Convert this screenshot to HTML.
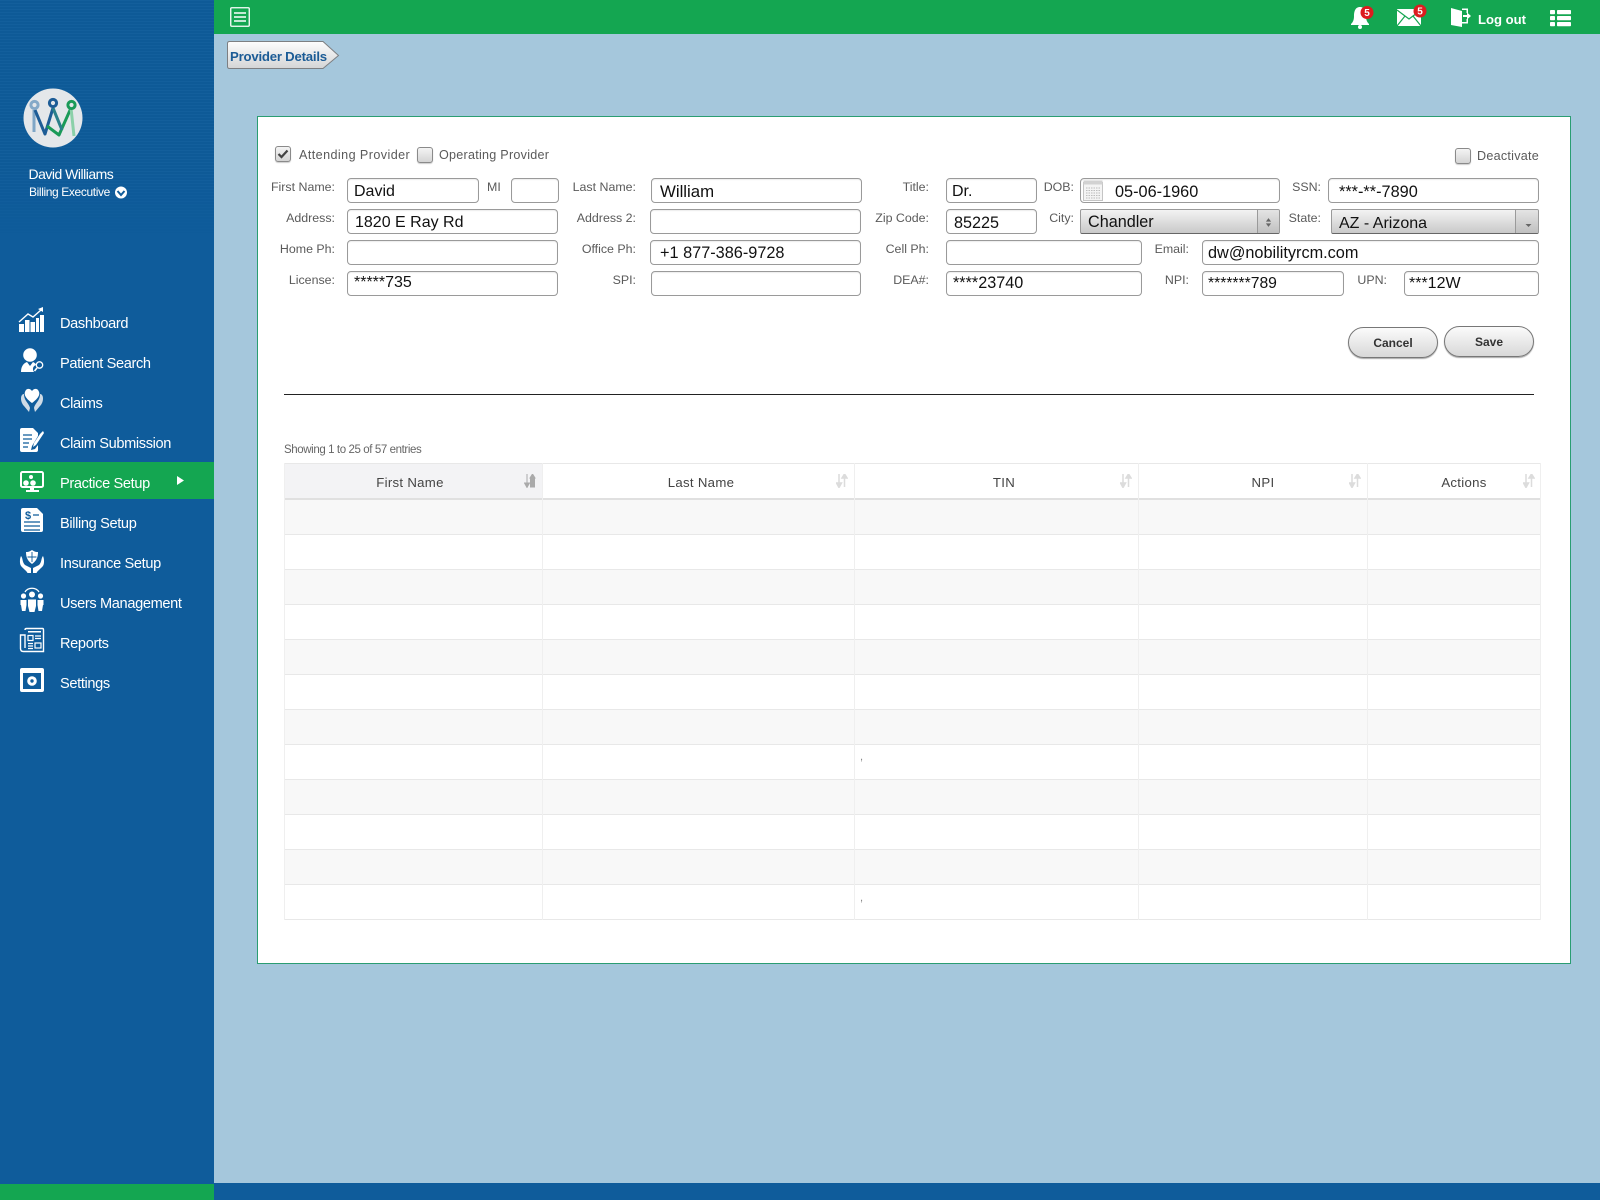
<!DOCTYPE html>
<html><head><meta charset="utf-8"><title>Provider Details</title>
<style>
html,body{margin:0;padding:0}
body{width:1600px;height:1200px;position:relative;overflow:hidden;background:#a5c7dc;font-family:"Liberation Sans",sans-serif}
.a{position:absolute}
#side{left:0;top:0;width:214px;height:1200px;background:#0f5c9b}
#stripes{left:0;top:0;width:214px;height:240px;background:repeating-linear-gradient(180deg,rgba(255,255,255,.02) 0 1px,rgba(0,0,0,.02) 1px 3px);-webkit-mask-image:linear-gradient(#000 70%,transparent);mask-image:linear-gradient(#000 70%,transparent)}
.nav{position:absolute;left:60px;color:#fff;font-size:14.6px;line-height:20px;white-space:nowrap;letter-spacing:-.36px}
#panel{left:257px;top:116px;width:1312px;height:846px;background:#fff;border:1px solid #2a9d72}
.l{position:absolute;font-size:12.4px;line-height:16px;color:#5a5a5a;white-space:nowrap}
.r{text-align:right;width:90px}
.b{position:absolute;box-sizing:border-box;background:#fff;border:1px solid #9a9a9a;border-radius:4px;box-shadow:inset 0 1px 1px rgba(0,0,0,.08)}
.t{position:absolute;font-size:16.3px;line-height:18px;color:#111;white-space:nowrap}
.c{position:absolute;box-sizing:border-box;width:16px;height:16px;border:1px solid #8a8a8a;border-radius:3px;background:linear-gradient(#f4f4f4,#d4d4d4);box-shadow:0 1px 1px rgba(0,0,0,.2)}
.s{position:absolute;box-sizing:border-box;border:1px solid #9a9a9a;border-bottom:1px solid #666;border-radius:2px;background:linear-gradient(#f3f3f3,#c9c9c9);overflow:hidden}
.p{position:absolute;box-sizing:border-box;border:1px solid #777;border-radius:16px;background:linear-gradient(#fbfbfb,#d8d8d8);box-shadow:0 1px 1px rgba(0,0,0,.35);font-size:12px;font-weight:bold;color:#333;text-align:center;line-height:30px}
.h{position:absolute;top:474px;font-size:13.2px;line-height:18px;color:#444;text-align:center;letter-spacing:.3px}
.row{position:absolute;left:284px;width:1257px;height:35px;box-sizing:border-box;border-bottom:1px solid #e8e8e8}
.v{position:absolute;top:463px;width:1px;height:457px;background:#efefef}
</style></head><body>
<div class="a" id="side"></div>
<div class="a" id="stripes"></div>
<div class="a" style="left:0;top:1184px;width:214px;height:16px;background:#14a651"></div>
<div class="a" style="left:214px;top:1183px;width:1386px;height:17px;background:#0f5c9b"></div>
<div class="a" style="left:214px;top:0;width:1386px;height:34px;background:#14a651"></div>
<div class="a" style="left:0;top:462px;width:214px;height:37px;background:#14a651"></div>

<svg class="a" style="left:0;top:0" width="214" height="720" viewBox="0 0 214 720">
 <!-- logo -->
 <circle cx="53" cy="118" r="29.5" fill="#e4e7ea"/>
 <g fill="none" stroke-width="3" stroke-linejoin="round">
  <path d="M34 110 V132" stroke="#7fa6c6"/>
  <path d="M35 110 L45 134 L53 108" stroke="#1d5c96"/>
  <path d="M47 126 L59 135 L71 108" stroke="#1a9a58"/>
  <path d="M71 108 L74 136" stroke="#8bd0a9"/>
  <path d="M53 108 L62 130" stroke="#2a7f8a"/>
  <circle cx="34.5" cy="105" r="3.6" stroke="#84a9c8"/>
  <circle cx="53" cy="103" r="3.6" stroke="#1d5c96"/>
  <circle cx="71.5" cy="105" r="3.6" stroke="#1a9a58"/>
 </g>
 <circle cx="121" cy="192.500" r="6" fill="#fff"/>
 <path d="M117.500 191 L121 195 L124.500 191" fill="none" stroke="#0f5c9b" stroke-width="2"/>
 <g fill="#fff">
  <!-- dashboard -->
  <rect x="19" y="324" width="5" height="8"/><rect x="25" y="320" width="4.500" height="12"/><rect x="30.500" y="322" width="4.500" height="10"/><rect x="36" y="318" width="3" height="14"/><rect x="40" y="315" width="4" height="17"/>
  <path d="M19 322 L28 314 L33 317 L41 310" fill="none" stroke="#fff" stroke-width="1.4"/><path d="M38 309 L43 307 L43 312z"/>
  <!-- patient -->
  <circle cx="30" cy="355" r="6.800"/><path d="M21 372 C21 366 24 363 27 362 L30 366 L33 362 C35 363 36 364 36 365 C33 366 32 369 34 372z"/>
  <circle cx="39.500" cy="365" r="3.200" fill="none" stroke="#fff" stroke-width="1.300"/><path d="M37 368 L34.500 371" stroke="#fff" stroke-width="1.600"/>
  <!-- claims -->
  <path d="M32 403 C25 398 24 394 25 392 C26 388 30 388 32 391 C34 388 38 388 39 392 C40 394 39 398 32 403z"/>
  <path d="M24 394 C20 394 20 402 24 406 L29 412 L30 408 C29 403 24 401 24 394z" fill="#cfdbe6"/>
  <path d="M40 394 C44 394 44 402 40 406 L35 412 L34 408 C35 403 40 401 40 394z" fill="#cfdbe6"/>
  <!-- claim submission -->
  <path d="M22 428 H33 L38 433 V436 L32 446 L31 450 L35 449 L38 445 V450 Q38 452 36 452 H22 Q20 452 20 450 V430 Q20 428 22 428z"/>
  <path d="M23 435 H32 M23 439 H32 M23 443 H29 M23 447 H28" stroke="#0f5c9b" stroke-width="1.300"/>
  <path d="M40 434 L43 431 L44 433 L36 445 L33 447 L34 443z"/>
  <!-- practice -->
  <rect x="21" y="472" width="22" height="15" rx="1.500" fill="none" stroke="#fff" stroke-width="2"/>
  <path d="M30 488 h4 v2 h5 v2 h-13 v-2 h4z"/>
  <circle cx="26" cy="483" r="2.800"/><circle cx="31" cy="477" r="2"/><circle cx="33" cy="483" r="2.800"/>
  <!-- billing -->
  <path d="M23 508 H37 L43 514 V530 Q43 532 41 532 H23 Q21 532 21 530 V510 Q21 508 23 508z"/>
  <path d="M24 522 H40 M24 526 H40 M24 530 H40 M33 515 H39" stroke="#0f5c9b" stroke-width="1.300"/>
  <!-- insurance -->
  <path d="M32 550 C29 552 28 552 26 552 C26 558 28 561 32 564 C36 561 38 558 38 552 C36 552 35 552 32 550z"/>
  <path d="M32 552 V562 M27.500 557 H36.500" stroke="#0f5c9b" stroke-width=".9" fill="none"/>
  <path d="M21 556 C23 558 22 562 25 565 L31 568 V573 H27.500 C26 570 22 568 20.500 565 C19.500 562 20 558 21 556z"/>
  <path d="M43 556 C41 558 42 562 39 565 L33 568 V573 H36.500 C38 570 42 568 43.500 565 C44.500 562 44 558 43 556z"/>
  <!-- users -->
  <path d="M25 592 C28 587 36 587 39 592" fill="none" stroke="#fff" stroke-width="1.300"/>
  <circle cx="23.500" cy="596" r="2.600"/><circle cx="32" cy="594.500" r="3"/><circle cx="40.500" cy="596" r="2.600"/>
  <path d="M20.500 600 H26.500 V605 L25.500 611 H22 L21 605 H20.500z"/><path d="M28 599.500 H36 V606 L34.500 612 H29.500 L28 606z"/><path d="M37.500 600 H43.500 V605 H43 L42 611 H38.500 L37.500 605z"/>
  <!-- settings -->
  <path d="M22 668 H42 Q44 668 44 670 V690 Q44 692 42 692 H22 Q20 692 20 690 V670 Q20 668 22 668z M23 673 V689 H41 V673z" fill-rule="evenodd"/>
  <circle cx="32" cy="681" r="4.800"/><circle cx="32" cy="681" r="1.700" fill="#0f5c9b"/>
 </g>
 <text x="25" y="519" font-family="Liberation Sans" font-size="11" font-weight="bold" fill="#0f5c9b">$</text>
 <!-- reports -->
 <g fill="none" stroke="#fff">
  <path d="M25 630 Q25 628.500 26.500 628.500 H42.500 Q43.500 628.500 43.500 630 V651.500 H23.500 Q20.500 651.500 20.500 648.500 V635 H25 V648" stroke-width="1.400"/>
  <rect x="28" y="631" width="13" height="1.500" fill="#fff" stroke="none"/>
  <rect x="28" y="635.500" width="5" height="5" stroke-width="1.200"/><rect x="35" y="643" width="6" height="5" stroke-width="1.200"/>
  <path d="M35 636 H41 M35 638.500 H41 M28 643.500 H33 M28 646 H33 M28 648.500 H33" stroke-width="1.200"/>
 </g>
 <path d="M177 476 L184 480.500 L177 485z" fill="#fff"/>
</svg>

<div class="a" style="left:28.500px;top:165px;font-size:14px;line-height:18px;color:#fff;white-space:nowrap;letter-spacing:-.5px">David Williams</div>
<div class="a" style="left:29px;top:184px;font-size:12px;line-height:16px;color:#fff;white-space:nowrap;letter-spacing:-.38px">Billing Executive</div>
<div class="nav" style="top:313.500px">Dashboard</div>
<div class="nav" style="top:353.500px">Patient Search</div>
<div class="nav" style="top:393.500px">Claims</div>
<div class="nav" style="top:433.500px">Claim Submission</div>
<div class="nav" style="top:473.500px">Practice Setup</div>
<div class="nav" style="top:513.500px">Billing Setup</div>
<div class="nav" style="top:553.500px">Insurance Setup</div>
<div class="nav" style="top:593.500px">Users Management</div>
<div class="nav" style="top:633.500px">Reports</div>
<div class="nav" style="top:673.500px">Settings</div>

<!-- top bar icons -->
<svg class="a" style="left:1340px;top:0" width="250" height="34" viewBox="1340 0 250 34">
 <g fill="#fff">
  <path d="M1360 7 C1365 7 1366 12 1366 16 C1366 20 1367 22 1369 24 V25 H1351 V24 C1353 22 1354 20 1354 16 C1354 12 1355 7 1360 7z"/>
  <circle cx="1360" cy="27" r="2"/>
  <path d="M1397 9 H1421 V26 H1397z"/>
  <path d="M1451 8 L1462 11 V27 L1451 25z"/>
  <path d="M1462 8.500 H1468 V13 H1466.500 V10 H1462z M1462 22 H1466.500 V19 H1468 V23.500 H1462z" />
  <path d="M1463 15 H1467 V12.500 L1471 16 L1467 19.500 V17 H1463z"/>
  <rect x="1550" y="10" width="5" height="4.200" rx=".8"/><rect x="1557" y="10" width="14" height="4.200" rx=".8"/>
  <rect x="1550" y="16" width="5" height="4.200" rx=".8"/><rect x="1557" y="16" width="14" height="4.200" rx=".8"/>
  <rect x="1550" y="22" width="5" height="4.200" rx=".8"/><rect x="1557" y="22" width="14" height="4.200" rx=".8"/>
 </g>
 <path d="M1397 10 L1409 19 L1421 10 M1397 26 L1405 16 M1421 26 L1413 16" fill="none" stroke="#14a651" stroke-width="1.200"/>
 <circle cx="1367" cy="12.500" r="6.500" fill="#dc1c1f"/><circle cx="1420" cy="11" r="6.500" fill="#dc1c1f"/>
 <text x="1367" y="16" font-family="Liberation Sans" font-size="10" font-weight="bold" fill="#fff" text-anchor="middle">5</text>
 <text x="1420" y="14.500" font-family="Liberation Sans" font-size="10" font-weight="bold" fill="#fff" text-anchor="middle">5</text>
</svg>
<div class="a" style="left:1478px;top:11px;font-size:13.100px;line-height:17px;font-weight:bold;color:#fff;white-space:nowrap">Log out</div>
<svg class="a" style="left:230px;top:7px" width="20" height="20" viewBox="0 0 20 20">
 <rect x=".75" y=".75" width="18.500" height="18.500" rx="1" fill="none" stroke="#fff" stroke-width="1.300"/>
 <path d="M4 6 H16 M4 10 H16 M4 14 H16" stroke="#fff" stroke-width="1.500"/>
</svg>

<!-- breadcrumb -->
<svg class="a" style="left:226px;top:40px" width="116" height="31" viewBox="0 0 116 31">
 <defs><linearGradient id="g" x1="0" y1="0" x2="0" y2="1"><stop offset="0" stop-color="#fdfdfd"/><stop offset="1" stop-color="#d4d5d6"/></linearGradient></defs>
 <path d="M3.500 1.500 H97 L112.500 15.500 L97 28.500 H3.500 Q1.500 28.500 1.500 26.500 V3.500 Q1.500 1.500 3.500 1.500z" fill="url(#g)" stroke="#7d7f82"/>
</svg>
<div class="a" style="left:230px;top:48px;font-size:13.200px;line-height:17px;font-weight:bold;color:#1c5c96;white-space:nowrap;letter-spacing:-.22px">Provider Details</div>

<!-- panel -->
<div class="a" id="panel"></div>

<div class="c" style="left:275px;top:146px"></div>
<svg class="a" style="left:277px;top:149px" width="12" height="10" viewBox="0 0 12 10"><path d="M1.500 5 L4.500 8 L10.500 1.500" fill="none" stroke="#444" stroke-width="2.200"/></svg>
<div class="l" style="left:299px;top:147px;letter-spacing:.42px;font-size:12.6px">Attending Provider</div>
<div class="c" style="left:417px;top:147px"></div>
<div class="l" style="left:439px;top:147px;letter-spacing:.25px;font-size:12.6px">Operating Provider</div>
<div class="c" style="left:1455px;top:148px"></div>
<div class="l" style="left:1477px;top:147.500px;letter-spacing:.25px;font-size:12.6px">Deactivate</div>

<!-- labels -->
<div class="l r" style="left:245px;top:179px">First Name:</div>
<div class="l" style="left:487px;top:179px">MI</div>
<div class="l r" style="left:546px;top:179px">Last Name:</div>
<div class="l r" style="left:839px;top:179px">Title:</div>
<div class="l r" style="left:984px;top:179px">DOB:</div>
<div class="l r" style="left:1231px;top:179px">SSN:</div>
<div class="l r" style="left:245px;top:210px">Address:</div>
<div class="l r" style="left:546px;top:210px">Address 2:</div>
<div class="l r" style="left:839px;top:210px">Zip Code:</div>
<div class="l r" style="left:984px;top:210px">City:</div>
<div class="l r" style="left:1231px;top:210px">State:</div>
<div class="l r" style="left:245px;top:241px">Home Ph:</div>
<div class="l r" style="left:546px;top:241px">Office Ph:</div>
<div class="l r" style="left:839px;top:241px">Cell Ph:</div>
<div class="l r" style="left:1099px;top:241px">Email:</div>
<div class="l r" style="left:245px;top:272px">License:</div>
<div class="l r" style="left:546px;top:272px">SPI:</div>
<div class="l r" style="left:839px;top:272px">DEA#:</div>
<div class="l r" style="left:1099px;top:272px">NPI:</div>
<div class="l r" style="left:1297px;top:272px">UPN:</div>

<!-- inputs -->
<div class="b" style="left:347px;top:178px;width:132px;height:25px"></div>
<div class="b" style="left:511px;top:178px;width:48px;height:25px"></div>
<div class="b" style="left:651px;top:178px;width:211px;height:25px"></div>
<div class="b" style="left:946px;top:178px;width:91px;height:25px"></div>
<div class="b" style="left:1080px;top:178px;width:200px;height:25px"></div>
<div class="b" style="left:1328px;top:178px;width:211px;height:25px"></div>
<div class="b" style="left:347px;top:209px;width:211px;height:25px"></div>
<div class="b" style="left:650px;top:209px;width:211px;height:25px"></div>
<div class="b" style="left:946px;top:209px;width:91px;height:25px"></div>
<div class="b" style="left:347px;top:240px;width:211px;height:25px"></div>
<div class="b" style="left:650px;top:240px;width:211px;height:25px"></div>
<div class="b" style="left:946px;top:240px;width:196px;height:25px"></div>
<div class="b" style="left:1202px;top:240px;width:337px;height:25px"></div>
<div class="b" style="left:347px;top:271px;width:211px;height:25px"></div>
<div class="b" style="left:651px;top:271px;width:210px;height:25px"></div>
<div class="b" style="left:946px;top:271px;width:196px;height:25px"></div>
<div class="b" style="left:1202px;top:271px;width:142px;height:25px"></div>
<div class="b" style="left:1404px;top:271px;width:135px;height:25px"></div>

<!-- selects -->
<div class="s" style="left:1080px;top:209px;width:200px;height:25px"><div class="a" style="right:0;top:0;bottom:0;width:21px;border-left:1px solid #9a9a9a;background:linear-gradient(#e4e4e4,#c0c0c0)"></div></div>
<svg class="a" style="left:1265px;top:218px" width="7" height="9" viewBox="0 0 8 10"><path d="M4 0 L7 4 H1z M4 10 L7 6 H1z" fill="#666"/></svg>
<div class="s" style="left:1331px;top:209px;width:208px;height:25px"><div class="a" style="right:0;top:0;bottom:0;width:22px;border-left:1px solid #9a9a9a;background:linear-gradient(#e4e4e4,#c0c0c0)"></div></div>
<svg class="a" style="left:1525px;top:224px" width="7" height="3" viewBox="0 0 8 4"><path d="M0 0 H8 L4 4z" fill="#666"/></svg>

<!-- calendar icon -->
<svg class="a" style="left:1083px;top:180px" width="21" height="21" viewBox="0 0 21 21">
 <rect x=".5" y="2.500" width="19" height="18" fill="#f4f4f4" stroke="#c4c4c4"/>
 <rect x=".5" y=".5" width="19" height="4" fill="#d2d2d2"/>
 <path d="M3 8 H17 M3 10.500 H17 M3 13 H17 M3 15.500 H17 M3 18 H17" stroke="#bdbdbd" stroke-dasharray="1.500 1"/>
</svg>

<!-- input text -->
<div class="t" style="left:354px;top:183px;font-size:16px">David</div>
<div class="t" style="left:660px;top:183px;font-size:16.8px">William</div>
<div class="t" style="left:952px;top:183px;font-size:16px">Dr.</div>
<div class="t" style="left:1115px;top:183px">05-06-1960</div>
<div class="t" style="left:1339px;top:182.500px">***-**-7890</div>
<div class="t" style="left:355px;top:213.500px;font-size:16px">1820 E Ray Rd</div>
<div class="t" style="left:954px;top:214px;font-size:16.2px">85225</div>
<div class="t" style="left:1088px;top:212.500px;font-size:16.2px">Chandler</div>
<div class="t" style="left:1339px;top:215px;font-size:16px">AZ - Arizona</div>
<div class="t" style="left:660px;top:243.500px">+1 877-386-9728</div>
<div class="t" style="left:1208px;top:243.500px">dw@nobilityrcm.com</div>
<div class="t" style="left:354px;top:274px;font-size:16px">*****735</div>
<div class="t" style="left:953px;top:274px;font-size:16.2px">****23740</div>
<div class="t" style="left:1208px;top:275px;font-size:15.7px">*******789</div>
<div class="t" style="left:1409px;top:275px;font-size:16px">***12W</div>

<!-- buttons -->
<div class="p" style="left:1348px;top:327px;width:90px;height:31px">Cancel</div>
<div class="p" style="left:1444px;top:326px;width:90px;height:31px">Save</div>

<div class="a" style="left:284px;top:394px;width:1250px;height:1px;background:#222"></div>

<div class="a" style="left:284px;top:442px;font-size:11.500px;line-height:16px;color:#666;white-space:nowrap;letter-spacing:-.4px">Showing 1 to 25 of 57 entries</div>

<!-- table -->
<div class="a" style="left:284px;top:463px;width:258px;height:36px;background:#f3f3f5"></div>
<div class="a" style="left:284px;top:463px;width:1257px;height:1px;background:#e8e8e8"></div>
<div class="a" style="left:284px;top:498px;width:1257px;height:2px;background:#e0e0e0"></div>
<div class="row" style="top:500px;height:35px;background:#f8f8f8"></div>
<div class="row" style="top:535px"></div>
<div class="row" style="top:570px;background:#f8f8f8"></div>
<div class="row" style="top:605px"></div>
<div class="row" style="top:640px;background:#f8f8f8"></div>
<div class="row" style="top:675px"></div>
<div class="row" style="top:710px;background:#f8f8f8"></div>
<div class="row" style="top:745px"></div>
<div class="row" style="top:780px;background:#f8f8f8"></div>
<div class="row" style="top:815px"></div>
<div class="row" style="top:850px;background:#f8f8f8"></div>
<div class="row" style="top:885px"></div>
<div class="v" style="left:284px"></div>
<div class="v" style="left:542px"></div>
<div class="v" style="left:854px"></div>
<div class="v" style="left:1138px"></div>
<div class="v" style="left:1367px"></div>
<div class="v" style="left:1540px"></div>
<div class="h" style="left:310px;width:200px">First Name</div>
<div class="h" style="left:601px;width:200px">Last Name</div>
<div class="h" style="left:904px;width:200px">TIN</div>
<div class="h" style="left:1163px;width:200px">NPI</div>
<div class="h" style="left:1364px;width:200px">Actions</div>
<svg class="a" style="left:524px;top:474px" width="12" height="14" viewBox="0 0 12 14"><path d="M3 0 V10 M.5 9 L3 13.500 L5.500 9z M8.500 13 V3 M6 4 L8.500 0 L11 4z M6.500 5 H10.500 V13 H6.500z" stroke="#aaa" fill="#aaa"/></svg>
<svg class="a" style="left:836px;top:474px" width="12" height="14" viewBox="0 0 12 14"><path d="M3 0 V10 M.5 9 L3 13.500 L5.500 9z M8.500 13 V3 M6 4 L8.500 0 L11 4z" stroke="#dcdcdc" stroke-width="1.500" fill="#dcdcdc"/></svg>
<svg class="a" style="left:1120px;top:474px" width="12" height="14" viewBox="0 0 12 14"><path d="M3 0 V10 M.5 9 L3 13.500 L5.500 9z M8.500 13 V3 M6 4 L8.500 0 L11 4z" stroke="#dcdcdc" stroke-width="1.500" fill="#dcdcdc"/></svg>
<svg class="a" style="left:1349px;top:474px" width="12" height="14" viewBox="0 0 12 14"><path d="M3 0 V10 M.5 9 L3 13.500 L5.500 9z M8.500 13 V3 M6 4 L8.500 0 L11 4z" stroke="#dcdcdc" stroke-width="1.500" fill="#dcdcdc"/></svg>
<svg class="a" style="left:1523px;top:474px" width="12" height="14" viewBox="0 0 12 14"><path d="M3 0 V10 M.5 9 L3 13.500 L5.500 9z M8.500 13 V3 M6 4 L8.500 0 L11 4z" stroke="#dcdcdc" stroke-width="1.500" fill="#dcdcdc"/></svg>
<div class="a" style="left:860px;top:751px;font-size:11px;line-height:12px;color:#888">,</div>
<div class="a" style="left:860px;top:892px;font-size:11px;line-height:12px;color:#888">,</div>
</body></html>
